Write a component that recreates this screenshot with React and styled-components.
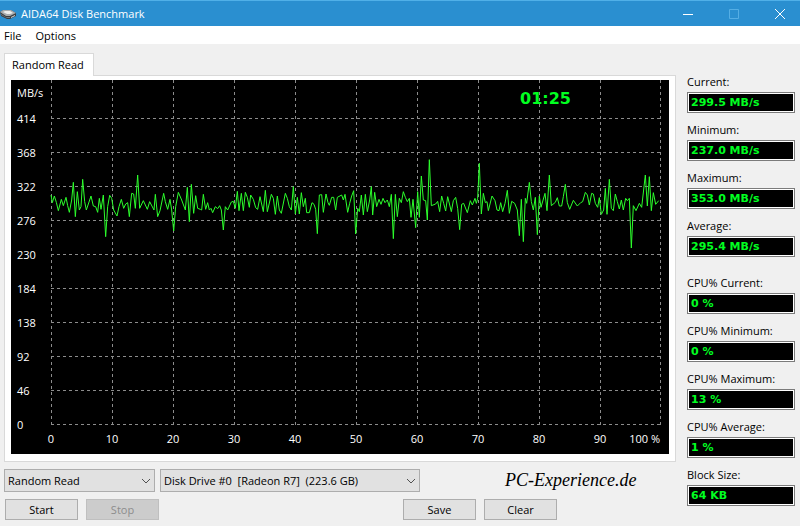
import React from "react";
import styled, { createGlobalStyle } from "styled-components";

const UI_FONT = '"Open Sans", "Noto Sans", sans-serif';
const METER_FONT = 'Verdana, "DejaVu Sans", sans-serif';

const GlobalStyle = createGlobalStyle`
  * { box-sizing: border-box; }
  body {
    margin: 0;
    background: #f0f0f0;
    color: #000;
    font-family: ${UI_FONT};
    font-size: 11px;
    line-height: 16px;
  }
  button, select { font: inherit; color: inherit; }
`;

const Window = styled.div`
  display: flex;
  flex-direction: column;
  min-height: 100vh;
  background: #f0f0f0;
`;

const TitleBar = styled.header`
  display: flex;
  align-items: center;
  height: 26px;
  border-top: 1px solid #50b0e8;
  background: #2a8fd0;
  color: #fff;
`;

const Title = styled.h1`
  flex: 1;
  margin: 0 0 0 5px;
  font-size: 11px;
  font-weight: 400;
`;

const CaptionButton = styled.button`
  display: grid;
  place-items: center;
  width: 46px;
  height: 25px;
  padding: 0 0 0 6px;
  border: 0;
  background: none;
`;

const MenuBar = styled.nav`
  display: flex;
  gap: 14px;
  height: 18px;
  padding: 0 4px;
  background: #fff;
`;

const MenuItem = styled.button`
  padding: 0;
  border: 0;
  background: none;
  line-height: 20px;
`;

const Body = styled.main`
  display: flex;
  gap: 11px;
  padding: 9px 5px 5px 4px;
`;

const Workspace = styled.section`
  flex: 1;
  min-width: 0;
`;

const TabList = styled.div`
  display: flex;
`;

const Tab = styled.button`
  z-index: 1;
  height: 23px;
  margin-bottom: -1px;
  padding: 0 9px 0 7px;
  border: 1px solid #d9d9d9;
  border-bottom: 0;
  background: #fff;
`;

const TabPanel = styled.div`
  padding: 4px 6px 7px;
  border: 1px solid #d9d9d9;
  background: #fff;
`;

const ChartSvg = styled.svg`
  display: block;
  width: 100%;
  height: auto;
  background: #000;
`;

const GridLine = styled.path`
  fill: none;
  stroke: #8c8c8c;
  stroke-dasharray: 3 3;
`;

const Trace = styled.polyline`
  fill: none;
  stroke: #2cff2c;
`;

const AxisText = styled.text`
  fill: #fff;
  font-family: ${UI_FONT};
  font-size: 11px;
`;

const TimerText = styled.text`
  fill: #00ff20;
  font-family: ${METER_FONT};
  font-size: 16px;
  font-weight: 700;
`;

const Controls = styled.div`
  display: flex;
  align-items: center;
  gap: 5px;
  margin-top: 7px;
`;

const SelectBox = styled.div`
  display: grid;
  flex: 0 1 ${(p) => p.$width}px;
  align-items: center;

  > * { grid-area: 1 / 1; }
  > svg { justify-self: end; margin-right: 4px; pointer-events: none; }
`;

const Select = styled.select`
  appearance: none;
  width: 100%;
  height: 23px;
  padding: 0 20px 0 3px;
  border: 1px solid #adadad;
  border-radius: 0;
  background: #e1e1e1;
`;

const Brand = styled.span`
  margin-left: 80px;
  font-family: "Monotype Corsiva", "URW Chancery L", "Z003", "Liberation Serif", serif;
  font-size: 18px;
  font-style: italic;
  line-height: 23px;
`;

const Actions = styled.div`
  display: flex;
  gap: 8px;
  margin-top: 7px;
  padding-left: 1px;
`;

const ActionGroup = styled.div`
  display: flex;
  gap: 8px;
  margin-left: 236px;
`;

const Button = styled.button`
  width: 73px;
  height: 21px;
  padding: 0;
  border: 1px solid #adadad;
  background: #e1e1e1;
  line-height: 19px;

  &:disabled {
    border-color: #bfbfbf;
    background: #ccc;
    color: #8c8c8c;
  }
`;

const Readings = styled.aside`
  display: flex;
  flex-direction: column;
  gap: 18px;
  width: 108px;
  padding-top: 21px;
`;

const ReadingGroup = styled.div`
  display: flex;
  flex-direction: column;
  gap: 9px;
`;

const Reading = styled.div`
  display: flex;
  flex-direction: column;
  gap: 2px;
`;

const ReadingLabel = styled.label`
  white-space: nowrap;
`;

const Meter = styled.output`
  height: 21px;
  padding: 0 3px;
  border: 1px solid #7b7b7b;
  outline: 1px solid #fff;
  outline-offset: -2px;
  background: #000;
  color: #00ff20;
  font-family: ${METER_FONT};
  font-size: 11px;
  font-weight: 700;
  line-height: 19px;
`;

const X_LINES = [40, 101, 162, 223, 284, 345, 406, 467, 528, 589, 649];
const Y_LABELS = [414, 368, 322, 276, 230, 184, 138, 92, 46, 0];

// Transfer rate samples, in thirds of a plot unit; each run starts at its own offset.
const RUNS = [
  [0, "18,105 22,128 28,108 34,127 40,152 49,118 55,137 63,112 68,137 73,157 80,120 85,67 91,170 97,95 103,150 108,140 113,58 119,125 124,150 130,132 138,108 145,138 152,140 158,157 163,115 168,148 175,105 182,230 188,140 194,106 200,115 206,150 216,168 222,140 229,118 236,145 242,132 248,128 253,170 260,100 266,102 271,145 278,45 284,145 295,122 307,148 314,125 327,150 331,103 338,170 345,152 356,100 361,125 368,148 375,118 380,150 386,213 392,140 400,97 410,120 421,150 427,82 433,185 439,73 446,160 452,107 458,145 466,148"],
  [465, "5,150 10,103 17,148 23,128 28,150 33,145 38,158 46,140 53,146 59,137 64,150 70,210 76,140 83,150 94,126 100,124 106,145 112,94 117,152 124,100 130,152 136,97 142,112 148,142 152,105 160,118 167,143 173,148 180,110 190,155 196,91 202,155 214,103 220,115 226,163 232,108 238,150 244,160 256,100 262,115 268,140 274,150 280,80 286,162 292,112 298,162 304,98 310,140 316,115 320,158 328,158 336,128 342,133 347,148 352,221 358,105 365,104 370,157 378,102 384,128 388,136 395,112 401,112 407,150 412,112 425,105 430,120 435,103 443,157 449,130 455,108 461,92 467,222"],
  [930, "8,145 13,155 19,105 25,165 31,103 37,155 44,120 49,80 53,165 59,97 65,140 72,118 78,133 84,115 90,128 97,120 103,140 109,103 115,236 121,103 127,170 133,115 139,128 145,95 151,112 157,125 163,115 168,172 174,118 182,203 188,95 193,172 199,48 205,120 212,122 217,180 223,-1 229,137 242,132 248,124 254,155 260,108 266,130 272,153 278,110 289,155 295,122 302,112 308,145 314,209 320,133 326,130 337,158 346,122 352,135 360,115 364,130 368,115 373,10 379,162 385,100 391,128 396,125 400,152 411,108 420,122 426,150 432,152 437,128 443,155 450,130 457,91 463,160"],
  [1395, "5,124 14,130 22,150 28,227 34,118 40,245 46,115 50,130 58,67 64,125 70,150 76,112 82,224 88,108 93,142 105,100 111,152 118,45 124,137 136,127 142,113 148,138 155,138 160,110 166,73 172,128 179,148 190,121 202,138 212,128 218,125 226,97 232,105 238,135 245,100 250,102 256,130 263,142 268,113 274,163 281,150 286,85 291,163 298,58 304,145 310,152 316,102 322,125 328,147 334,120 340,150 347,115 352,122 358,115 364,264 370,137 378,152 388,130 395,142 406,45 412,138 418,50 424,152 430,98 437,133 446,122"],
];

const TRACE_POINTS = RUNS.flatMap(([offset, run]) =>
  run.split(" ").map((pair) => {
    const [x, y] = pair.split(",").map(Number);
    return `${34 + (x + offset) / 3},${80 + y / 3}`;
  })
).join(" ");

const SPEEDS = [
  ["Current:", "299.5 MB/s"],
  ["Minimum:", "237.0 MB/s"],
  ["Maximum:", "353.0 MB/s"],
  ["Average:", "295.4 MB/s"],
];

const CPU_AND_BLOCK = [
  ["CPU% Current:", "0 %"],
  ["CPU% Minimum:", "0 %"],
  ["CPU% Maximum:", "13 %"],
  ["CPU% Average:", "1 %"],
  ["Block Size:", "64 KB"],
];

function DriveIcon() {
  return (
    <svg width="16" height="12" viewBox="0 0 16 12" aria-hidden="true">
      <path d="M0 4 3 2h8l5 3v3l-6 3H7L1 8z" fill="#3a3d40" />
      <path d="M0 4 3 2h8l5 3-6 3H6z" fill="#a9acae" />
      <path d="M3 4 5 3h5l3 2-3 1H7z" fill="#eeeeec" />
      <path d="m1 6 5 3h4v1H7L1 7z" fill="#77797b" />
      <path d="m11 9 4-2v1l-4 2z" fill="#d4d6d8" />
    </svg>
  );
}

function Chevron() {
  return (
    <svg width="10" height="6" viewBox="0 0 10 6" aria-hidden="true">
      <path d="m1 1 4 4 4-4" fill="none" stroke="#505050" />
    </svg>
  );
}

function Chart() {
  return (
    <ChartSvg viewBox="0 0 658 374" role="img" aria-label="Random read speed in MB/s">
      {X_LINES.map((x) => (
        <GridLine key={x} d={`M${x + 0.5} 0V345`} />
      ))}
      {Y_LABELS.map((label, i) => (
        <GridLine key={label} d={`M40 ${38.5 + i * 34}H650`} />
      ))}
      <AxisText x="6" y="17">MB/s</AxisText>
      {Y_LABELS.map((label, i) => (
        <AxisText key={label} x="6" y={43 + i * 34}>{label}</AxisText>
      ))}
      {X_LINES.slice(0, 10).map((x, i) => (
        <AxisText key={x} x={x} y="363" textAnchor="middle">{i * 10}</AxisText>
      ))}
      <AxisText x="649" y="363" textAnchor="end">100 %</AxisText>
      <TimerText x="509" y="24">01:25</TimerText>
      <Trace points={TRACE_POINTS} />
    </ChartSvg>
  );
}

function ReadingList({ items }) {
  return (
    <ReadingGroup>
      {items.map(([label, value]) => {
        const id = label.toLowerCase().replace(/[^a-z%]+/g, "").replace("%", "-");
        return (
          <Reading key={id}>
            <ReadingLabel htmlFor={id}>{label}</ReadingLabel>
            <Meter id={id}>{value}</Meter>
          </Reading>
        );
      })}
    </ReadingGroup>
  );
}

export default function App() {
  return (
    <Window>
      <GlobalStyle />
      <TitleBar>
        <DriveIcon />
        <Title>AIDA64 Disk Benchmark</Title>
        <CaptionButton aria-label="Minimize">
          <svg width="10" height="10"><path d="M0 5.5h10" stroke="#fff" /></svg>
        </CaptionButton>
        <CaptionButton aria-label="Maximize" disabled>
          <svg width="10" height="10"><path d="M.5.5h9v9h-9z" fill="none" stroke="#55aee4" /></svg>
        </CaptionButton>
        <CaptionButton aria-label="Close">
          <svg width="10" height="10"><path d="m0 0 10 10M10 0 0 10" stroke="#fff" /></svg>
        </CaptionButton>
      </TitleBar>
      <MenuBar>
        <MenuItem>File</MenuItem>
        <MenuItem>Options</MenuItem>
      </MenuBar>
      <Body>
        <Workspace>
          <TabList role="tablist">
            <Tab role="tab" aria-selected="true">Random Read</Tab>
          </TabList>
          <TabPanel role="tabpanel">
            <Chart />
          </TabPanel>
          <Controls>
            <SelectBox $width={151}>
              <Select aria-label="Test">
                <option>Random Read</option>
              </Select>
              <Chevron />
            </SelectBox>
            <SelectBox $width={260}>
              <Select aria-label="Drive">
                <option>{"Disk Drive #0\u00a0 [Radeon R7]\u00a0 (223.6 GB)"}</option>
              </Select>
              <Chevron />
            </SelectBox>
            <Brand>PC-Experience.de</Brand>
          </Controls>
          <Actions>
            <Button>Start</Button>
            <Button disabled>Stop</Button>
            <ActionGroup>
              <Button>Save</Button>
              <Button>Clear</Button>
            </ActionGroup>
          </Actions>
        </Workspace>
        <Readings>
          <ReadingList items={SPEEDS} />
          <ReadingList items={CPU_AND_BLOCK} />
        </Readings>
      </Body>
    </Window>
  );
}
